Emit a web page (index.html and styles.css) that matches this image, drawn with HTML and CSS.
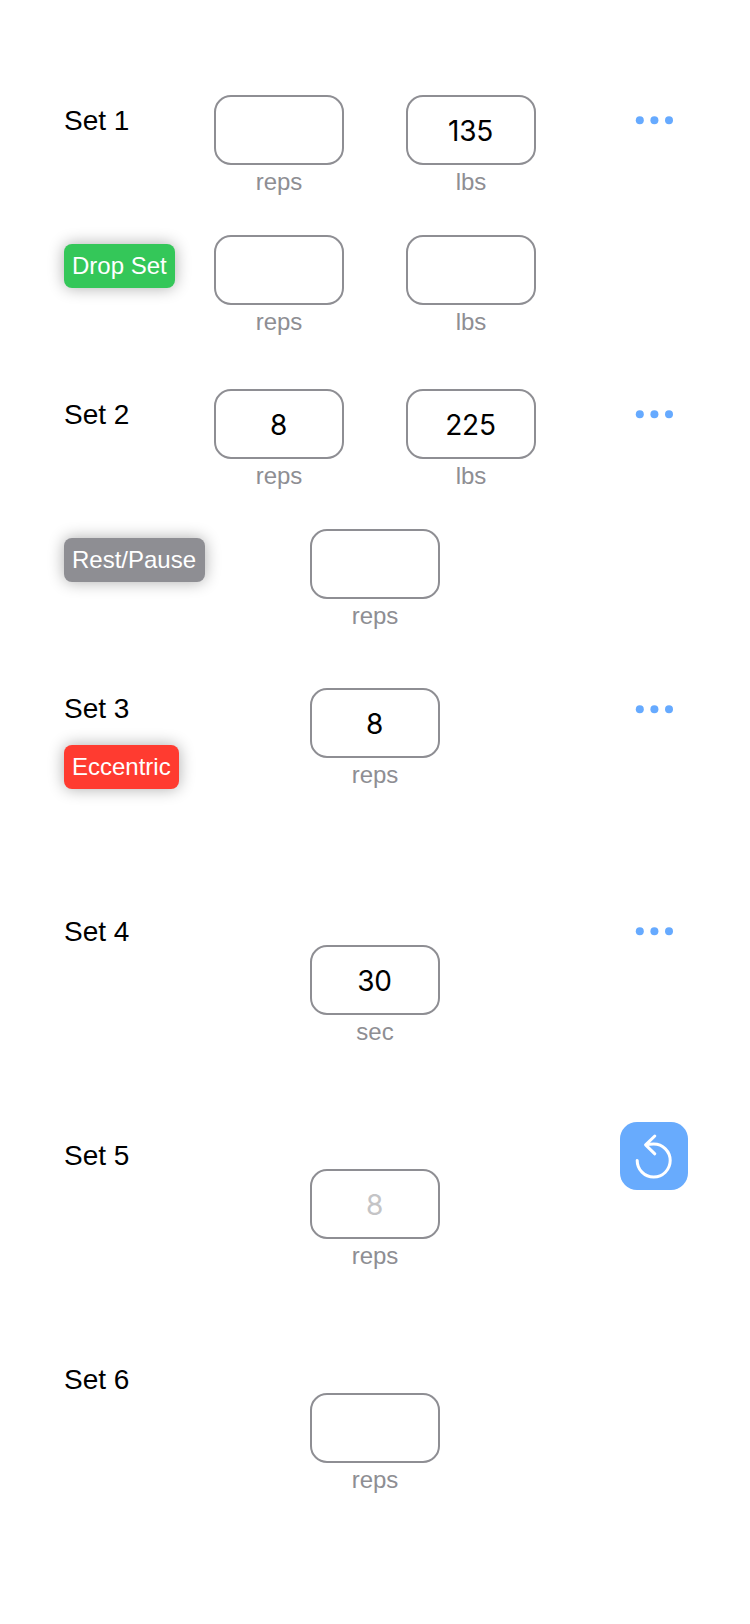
FILE: index.html
```html
<!DOCTYPE html>
<html lang="en">
<head>
<meta charset="utf-8">
<title>Sets</title>
<link rel="stylesheet" href="styles.css">
</head>
<body>
<main class="sets">
  <section class="row row-main">
    <div class="lead"><span class="name">Set 1</span></div>
    <div class="fields">
      <div class="field"><div class="box"></div><span class="unit">reps</span></div>
      <div class="field"><div class="box">135</div><span class="unit">lbs</span></div>
    </div>
    <svg class="menu" width="68" height="34" viewBox="0 0 68 34"><circle cx="19.8" cy="17.2" r="4"/><circle cx="34.4" cy="17.2" r="4"/><circle cx="49" cy="17.2" r="4"/></svg>
  </section>
  <section class="row row-drop">
    <div class="lead"><span class="badge green">Drop Set</span></div>
    <div class="fields">
      <div class="field"><div class="box"></div><span class="unit">reps</span></div>
      <div class="field"><div class="box"></div><span class="unit">lbs</span></div>
    </div>
  </section>
  <section class="row row-main">
    <div class="lead"><span class="name">Set 2</span></div>
    <div class="fields">
      <div class="field"><div class="box">8</div><span class="unit">reps</span></div>
      <div class="field"><div class="box">225</div><span class="unit">lbs</span></div>
    </div>
    <svg class="menu" width="68" height="34" viewBox="0 0 68 34"><circle cx="19.8" cy="17.2" r="4"/><circle cx="34.4" cy="17.2" r="4"/><circle cx="49" cy="17.2" r="4"/></svg>
  </section>
  <section class="row row-rest">
    <div class="lead"><span class="badge gray">Rest/Pause</span></div>
    <div class="fields">
      <div class="field"><div class="box"></div><span class="unit">reps</span></div>
    </div>
  </section>
  <section class="row row-eccentric">
    <div class="lead"><span class="name">Set 3</span><span class="badge red">Eccentric</span></div>
    <div class="fields">
      <div class="field"><div class="box">8</div><span class="unit">reps</span></div>
    </div>
    <svg class="menu" width="68" height="34" viewBox="0 0 68 34"><circle cx="19.8" cy="17.2" r="4"/><circle cx="34.4" cy="17.2" r="4"/><circle cx="49" cy="17.2" r="4"/></svg>
  </section>
  <section class="row row-low row-timed">
    <div class="lead"><span class="name">Set 4</span></div>
    <div class="fields">
      <div class="field"><div class="box">30</div><span class="unit">sec</span></div>
    </div>
    <svg class="menu" width="68" height="34" viewBox="0 0 68 34"><circle cx="19.8" cy="17.2" r="4"/><circle cx="34.4" cy="17.2" r="4"/><circle cx="49" cy="17.2" r="4"/></svg>
  </section>
  <section class="row row-low">
    <div class="lead"><span class="name">Set 5</span></div>
    <div class="fields">
      <div class="field"><div class="box hint">8</div><span class="unit">reps</span></div>
    </div>
    <div class="undo">
      <svg width="68" height="68" viewBox="0 0 68 68" fill="none" stroke="#fff" stroke-width="3" stroke-linecap="round" stroke-linejoin="round">
        <path d="M17.2 38.4A16.5 16.5 0 1 0 33.7 22Q29.5 22 26 22.9M34.8 14L25.6 22.9L34.8 31.8"/>
      </svg>
    </div>
  </section>
  <section class="row row-low">
    <div class="lead"><span class="name">Set 6</span></div>
    <div class="fields">
      <div class="field"><div class="box"></div><span class="unit">reps</span></div>
    </div>
  </section>
</main>
</body>
</html>
```
FILE: styles.css
```css
* { box-sizing: border-box; }
body {
  margin: 0;
  background: #fff;
  color: #000;
  font-family: "Liberation Sans", Arial, sans-serif;
}
.sets {
  display: flex;
  flex-direction: column;
  min-height: 1624px;
  padding-top: 95px;
}
.row {
  display: grid;
  grid-template-columns: 150px 322px 84px 68px;
  align-items: start;
  padding-left: 64px;
}
.lead {
  display: flex;
  flex-direction: column;
  align-items: flex-start;
}
.name { font-size: 28px; line-height: 34px; white-space: nowrap; }
.badge {
  height: 44px;
  padding: 0 8px;
  border-radius: 8px;
  color: #fff;
  font-size: 24px;
  line-height: 44px;
  white-space: nowrap;
  box-shadow: 0 0 16px rgba(0, 0, 0, .33);
}
.green { background: #34c759; }
.gray { padding-right: 9px; background: #8e8e93; }
.red { background: #ff3b30; }
.fields { display: flex; justify-content: center; gap: 62px; }
.field { display: flex; flex-direction: column; align-items: center; }
.box {
  display: flex;
  align-items: center;
  justify-content: center;
  width: 130px;
  height: 70px;
  padding: 1px 1px 0 0;
  border: 2px solid #8e8e93;
  border-radius: 17px;
  font-family: Inter, sans-serif;
  font-size: 28px;
  letter-spacing: -.2px;
}
.hint { color: #c4c4c6; }
.unit { margin-top: 3px; color: #8e8e93; font-size: 24px; line-height: 28px; }
.menu { grid-column: 4; display: block; fill: #66aaff; }
.undo {
  grid-column: 4;
  width: 68px;
  height: 68px;
  margin-top: -17px;
  border-radius: 17px;
  background: #68abfd;
}
.undo svg { display: block; }

.row-main { height: 140px; }
.row-main .lead { margin-top: 9px; }
.row-main .menu { margin-top: 8px; }
.row-drop { height: 154px; }
.row-rest { height: 159px; }
.row-drop .lead, .row-rest .lead { padding-top: 9px; }
.row-eccentric { height: 226px; }
.row-eccentric .lead, .row-eccentric .menu { margin-top: 4px; }
.row-eccentric .badge { margin-top: 19px; }
.row-low { height: 224px; }
.row-timed { height: 225px; }
.row-low .fields { padding-top: 30px; }
.row-timed .fields { padding-top: 31px; }
.row-timed .lead { padding-top: 1px; }
```
